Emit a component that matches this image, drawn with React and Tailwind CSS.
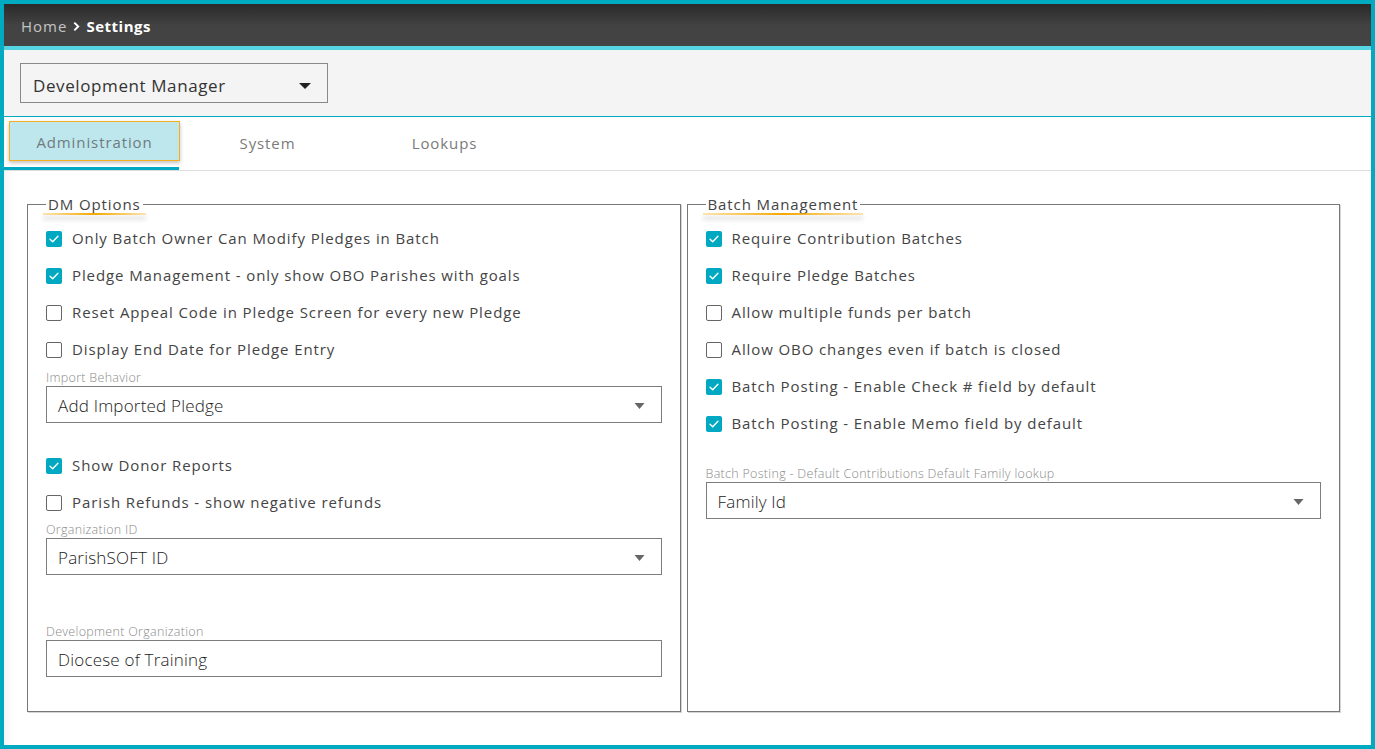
import React from "react";

const FONT = { fontFamily: '"Open Sans", "Liberation Sans", sans-serif' };

function Check({ checked }) {
  if (checked) {
    return (
      <span className="flex h-[16px] w-[16px] shrink-0 items-center justify-center rounded-[2px] bg-[#00a9c1]">
        <svg viewBox="0 0 16 16" className="h-[14px] w-[14px]" fill="none" stroke="white" strokeWidth="1.6" strokeLinecap="round" strokeLinejoin="round">
          <path d="M3.5 8.3 L6.5 11.2 L12.5 4.8" />
        </svg>
      </span>
    );
  }
  return <span className="h-[16px] w-[16px] shrink-0 rounded-[2px] border-[1.5px] border-[#666] bg-white" />;
}

function Row({ label, checked }) {
  return (
    <div className="flex h-[37px] items-center gap-[10px]">
      <Check checked={checked} />
      <span className="text-[15px] tracking-[0.9px] text-[#444]">{label}</span>
    </div>
  );
}

function Field({ label, value, select, className = "" }) {
  return (
    <div className={className}>
      <div className="h-[15px] text-[12.5px] font-light leading-[15px] tracking-[0.3px] text-[#8a8a8a]">{label}</div>
      <div className="mt-[1px] flex h-[37px] items-center justify-between border border-[#7d7d7d] bg-white pl-[11px] pr-[16px] pt-[2px]">
        <span className="text-[17px] font-light tracking-[0.2px] text-[#222]">{value}</span>
        {select && (
          <svg viewBox="0 0 10 6" className="h-[6px] w-[11px]">
            <path d="M0 0 H10 L5 6 Z" fill="#666" />
          </svg>
        )}
      </div>
    </div>
  );
}

function Panel({ title, children }) {
  return (
    <fieldset className="min-w-0 flex-1 border border-[#777] px-[18px] pb-[34px] pt-[6px] shadow-[1px_1px_0_#d5d5d5]">
      <legend className="relative px-[2px] text-[15px] leading-[20px] tracking-[0.9px] text-[#444]">
        {title}
        <span className="absolute -bottom-[1px] left-[-3px] right-[-3px] h-[2px] bg-gradient-to-r from-[#f5a800]/30 via-[#f5a800] to-[#f5a800]/30 shadow-[0_4px_5px_rgba(0,0,0,0.22)]" />
      </legend>
      {children}
    </fieldset>
  );
}

export default function App() {
  return (
    <div className="flex h-[749px] w-full flex-col overflow-hidden border-4 border-[#00abc2] bg-white" style={FONT}>
      {/* breadcrumb bar */}
      <div className="flex h-[42px] shrink-0 items-center bg-gradient-to-b from-[#2a2a2a] via-[#424242] to-[#444] px-[17px] pt-[2px] text-[15px]">
        <span className="tracking-[1px] text-[#c4c4c4]">Home</span>
        <svg viewBox="0 0 8 12" className="mx-[6px] h-[11px] w-[7px]" fill="none" stroke="white" strokeWidth="2.2">
          <path d="M1.5 1.5 L6 6 L1.5 10.5" />
        </svg>
        <span className="font-bold tracking-[0.5px] text-white">Settings</span>
      </div>
      <div className="h-[4px] shrink-0 bg-[#55d4e3]" />

      {/* module selector */}
      <div className="h-[67px] shrink-0 border-b border-[#00abc2] bg-[#f4f4f4] pl-[16px] pt-[13px]">
        <div className="flex h-[40px] w-[308px] items-center justify-between border border-[#888] pl-[12px] pr-[16px] pt-[5px]">
          <span className="text-[17px] tracking-[0.6px] text-[#333]">Development Manager</span>
          <svg viewBox="0 0 12 6" className="h-[6px] w-[12px]">
            <path d="M0 0 H12 L6 6 Z" fill="#222" />
          </svg>
        </div>
      </div>

      {/* tabs */}
      <div className="flex h-[54px] shrink-0 border-b border-[#ddd]">
        <div className="w-[175px] border-b-[3px] border-[#00a9c1] pl-[5px] pt-[4px]">
          <div className="flex h-[40px] w-[171px] items-center justify-center border border-[#f5b020] bg-[#bde7ed] pt-[3px] text-[15px] tracking-[0.9px] text-[#6f7b7d] shadow-[0_2px_4px_rgba(0,0,0,0.25)]">
            Administration
          </div>
        </div>
        <div className="flex w-[177px] items-center justify-center text-[15px] tracking-[0.9px] text-[#7a7a7a]">System</div>
        <div className="flex w-[177px] items-center justify-center text-[15px] tracking-[0.9px] text-[#7a7a7a]">Lookups</div>
      </div>

      {/* content */}
      <div className="flex flex-1 gap-[6px] pl-[23px] pr-[31px] pt-[23px] shadow-[inset_10px_0_10px_-8px_rgba(0,0,0,0.07)]">
        <div className="flex h-[518px] flex-1 gap-[6px]">
          <Panel title="DM Options">
            <Row checked label="Only Batch Owner Can Modify Pledges in Batch" />
            <Row checked label="Pledge Management - only show OBO Parishes with goals" />
            <Row label="Reset Appeal Code in Pledge Screen for every new Pledge" />
            <Row label="Display End Date for Pledge Entry" />
            <Field className="mt-[2px]" label="Import Behavior" value="Add Imported Pledge" select />
            <div className="mt-[24px]">
              <Row checked label="Show Donor Reports" />
              <Row label="Parish Refunds - show negative refunds" />
            </div>
            <Field className="mt-[1px]" label="Organization ID" value="ParishSOFT ID" select />
            <Field className="mt-[49px]" label="Development Organization" value="Diocese of Training" />
          </Panel>
          <Panel title="Batch Management">
            <Row checked label="Require Contribution Batches" />
            <Row checked label="Require Pledge Batches" />
            <Row label="Allow multiple funds per batch" />
            <Row label="Allow OBO changes even if batch is closed" />
            <Row checked label="Batch Posting - Enable Check # field by default" />
            <Row checked label="Batch Posting - Enable Memo field by default" />
            <Field className="mt-[24px]" label="Batch Posting - Default Contributions Default Family lookup" value="Family Id" select />
          </Panel>
        </div>
      </div>
    </div>
  );
}
